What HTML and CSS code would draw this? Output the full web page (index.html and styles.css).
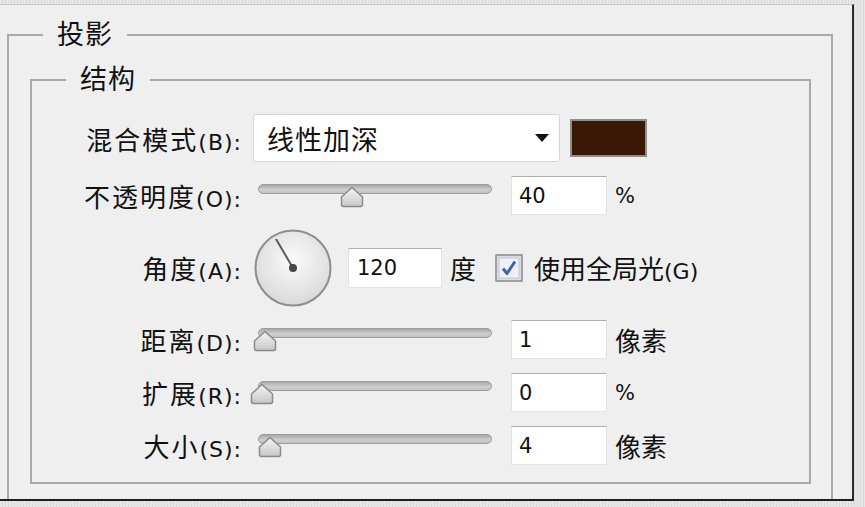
FILE: index.html
```html
<!DOCTYPE html>
<html lang="zh-CN">
<head>
  <meta charset="UTF-8" />
  <title>投影</title>
  <link rel="stylesheet" href="styles.css">
</head>
<body>
  <div class="dialog">
    <fieldset class="group outer">
      <legend>投影</legend>
      <fieldset class="group inner">
        <legend>结构</legend>
        <div class="rows">

          <div class="row row-blend">
            <label class="label">混合模式<span class="key">(B):</span></label>
            <div class="select"><span>线性加深</span><i class="caret"></i></div>
            <span class="swatch"></span>
          </div>

          <div class="row row-slider">
            <label class="label">不透明度<span class="key">(O):</span></label>
            <div class="slider">
              <div class="track"></div>
              <svg class="thumb" style="left: 87px" viewBox="0 0 24 22"><use href="#thumb-shape" /></svg>
            </div>
            <input class="field" type="text" value="40" />
            <span class="unit key">%</span>
          </div>

          <div class="row row-angle">
            <label class="label">角度<span class="key">(A):</span></label>
            <svg class="dial" viewBox="0 0 78 78">
              <defs>
                <radialGradient id="dialFill" cx="50%" cy="40%" r="60%">
                  <stop offset="0" stop-color="#fbfbfb" />
                  <stop offset="1" stop-color="#d9d9d9" />
                </radialGradient>
              </defs>
              <circle cx="39" cy="39" r="37.5" fill="url(#dialFill)" stroke="#8d8d8d" stroke-width="2" />
              <line x1="39" y1="39" x2="22" y2="10" stroke="#5a5a5a" stroke-width="2" />
              <circle cx="39" cy="39" r="4" fill="#474747" />
            </svg>
            <input class="field field-angle" type="text" value="120" />
            <span class="unit">度</span>
            <svg class="check" viewBox="0 0 28 28">
              <rect x="1" y="1" width="26" height="26" fill="#dadce4" stroke="#8a8a8a" stroke-width="1.5" />
              <rect x="4" y="4" width="20" height="20" fill="#eef0f6" stroke="#c4c8d6" stroke-width="1" />
              <path d="M8 14.5 L12 19.5 L20 7.5" fill="none" stroke="#4660b0" stroke-width="3" stroke-linejoin="round" />
            </svg>
            <span class="check-text">使用全局光<span class="key">(G)</span></span>
          </div>

          <div class="row row-slider">
            <label class="label">距离<span class="key">(D):</span></label>
            <div class="slider">
              <div class="track"></div>
              <svg class="thumb" style="left: 0px" viewBox="0 0 24 22"><use href="#thumb-shape" /></svg>
            </div>
            <input class="field" type="text" value="1" />
            <span class="unit">像素</span>
          </div>

          <div class="row row-slider">
            <label class="label">扩展<span class="key">(R):</span></label>
            <div class="slider">
              <div class="track"></div>
              <svg class="thumb" style="left: -3px" viewBox="0 0 24 22"><use href="#thumb-shape" /></svg>
            </div>
            <input class="field" type="text" value="0" />
            <span class="unit key">%</span>
          </div>

          <div class="row row-slider">
            <label class="label">大小<span class="key">(S):</span></label>
            <div class="slider">
              <div class="track"></div>
              <svg class="thumb" style="left: 5px" viewBox="0 0 24 22"><use href="#thumb-shape" /></svg>
            </div>
            <input class="field" type="text" value="4" />
            <span class="unit">像素</span>
          </div>

        </div>
      </fieldset>
    </fieldset>
  </div>

  <!-- shared slider thumb -->
  <svg width="0" height="0" class="defs">
    <defs>
      <linearGradient id="thumbFill" x1="0" y1="0" x2="0" y2="1">
        <stop offset="0" stop-color="#f6f6f6" />
        <stop offset="1" stop-color="#c6c6c6" />
      </linearGradient>
      <path id="thumb-shape" d="M1.5 18.5 V11 L12 1.5 L22.5 11 V18.5 Q22.5 20.5 20.5 20.5 H3.5 Q1.5 20.5 1.5 18.5 Z"
            fill="url(#thumbFill)" stroke="#8a8a8a" stroke-width="1.5" stroke-linejoin="round" />
    </defs>
  </svg>
</body>
</html>
```

FILE: styles.css
```css
body {
  margin: 0;
  width: 865px;
  height: 507px;
  overflow: hidden;
  background: repeating-linear-gradient(90deg, #e7e7e7 0 2px, #d9d9d9 2px 3px);
  font-family: "DejaVu Sans", "Noto Sans CJK SC", sans-serif;
  color: #111;
}
.defs {
  position: absolute;
}
.dialog {
  box-sizing: border-box;
  width: 854px;
  height: 497px;
  margin-top: 4px;
  padding: 16px 0 0 7px;
  background: #efefef;
  border-top: 1px solid #c6c6c6;
  border-right: 2px solid #2b2b2b;
  border-bottom: 2px solid #1e1e1e;
  overflow: hidden;
}
.group {
  margin: 0;
  min-width: 0;
  border: 2px solid #a9a9a9;
}
.group > legend {
  font-size: 27px;
  line-height: 28px;
  letter-spacing: 1px;
  padding: 0 14px;
}
.outer {
  box-sizing: border-box;
  width: 826px;
  padding: 17px 20px 40px 21px;
}
.outer > legend {
  margin-left: 13px;
}
.inner {
  padding: 20px 0 17px 0;
}
.inner > legend {
  margin-left: 34px;
}
.rows {
  display: flex;
  flex-direction: column;
  gap: 14px;
}
.row {
  display: flex;
  align-items: center;
}
.row-blend {
  height: 48px;
}
.row-slider {
  height: 39px;
}
.row-angle {
  height: 77px;
}
.label {
  flex: none;
  width: 209px;
  margin-right: 12px;
  text-align: right;
  font-size: 26px;
  letter-spacing: 2px;
  white-space: nowrap;
}
.key {
  font-size: 22px;
  letter-spacing: 1px;
}
.label .key {
  margin-right: -1px;
}
.select {
  box-sizing: border-box;
  display: flex;
  align-items: center;
  width: 307px;
  height: 48px;
  padding: 0 10px 0 13px;
  background: #fff;
  border: 1px solid #d6d6d6;
  border-radius: 3px;
  font-size: 27px;
  letter-spacing: 1px;
}
.caret {
  margin-left: auto;
  border-left: 7px solid transparent;
  border-right: 7px solid transparent;
  border-top: 8px solid #111;
}
.swatch {
  box-sizing: border-box;
  width: 77px;
  height: 38px;
  margin-left: 10px;
  background: #3a1806;
  border: 2px solid #8e8e8e;
}
.slider {
  position: relative;
  flex: none;
  align-self: flex-start;
  width: 239px;
  height: 38px;
}
.track {
  box-sizing: border-box;
  height: 10px;
  margin: 8px 0 0 5px;
  border: 1px solid #9c9c9c;
  border-radius: 5px;
  background: linear-gradient(#a8a8a8, #cfcfcf 60%, #c2c2c2);
}
.thumb {
  position: absolute;
  top: 10px;
  width: 24px;
  height: 22px;
}
.field {
  box-sizing: border-box;
  flex: none;
  width: 96px;
  height: 39px;
  margin: 0 0 0 19px;
  padding: 0 7px;
  background: #fff;
  border: 1px solid #e3e3e3;
  border-top-color: #acacac;
  font: 21px "DejaVu Sans", sans-serif;
  color: #111;
  outline: none;
}
.field-angle {
  width: 94px;
  height: 40px;
  margin-left: 16px;
  padding-left: 8px;
}
.unit {
  margin-left: 8px;
  font-size: 26px;
}
.unit.key {
  font-size: 21px;
}
.dial {
  flex: none;
  width: 78px;
  height: 78px;
  margin-left: 1px;
}
.check {
  flex: none;
  width: 28px;
  height: 28px;
  margin-left: 19px;
}
.check-text {
  margin-left: 11px;
  font-size: 26px;
  white-space: nowrap;
}
.check-text .key {
  letter-spacing: 0;
}
```
